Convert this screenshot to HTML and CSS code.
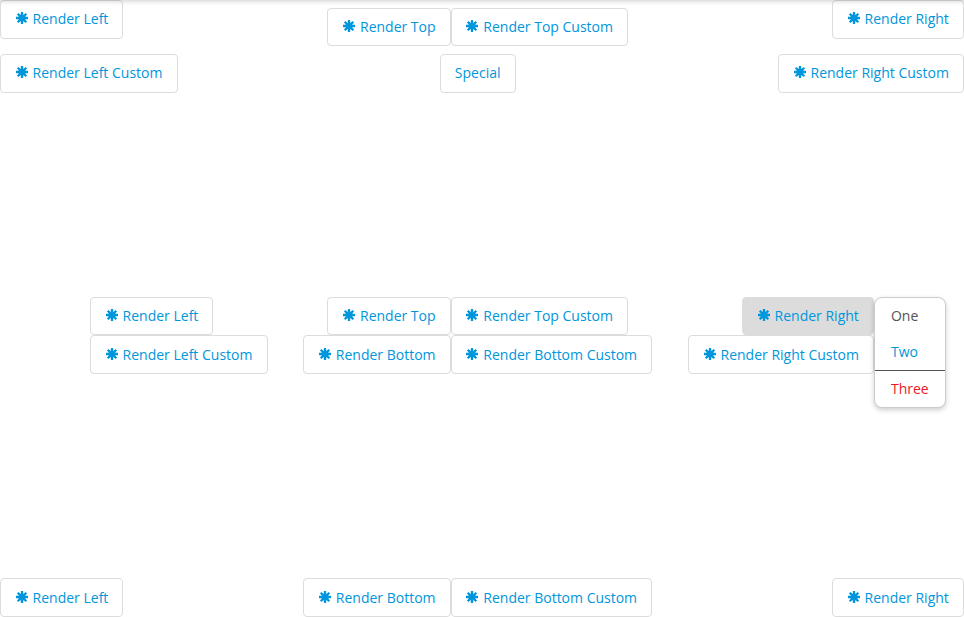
FILE: index.html
```html
<!DOCTYPE html>
<html lang="en">
<head>
<meta charset="utf-8">
<title>Menus</title>
<link rel="stylesheet" href="styles.css">
</head>
<body>
<svg class="defs" aria-hidden="true">
  <symbol id="asterisk" viewBox="0 0 12 12">
    <path d="M6 0V12M0 6H12M1.7 1.7L10.3 10.3M10.3 1.7L1.7 10.3" fill="none" stroke="currentColor" stroke-width="2.3"/>
    <circle cx="6" cy="6" r="3.5" fill="currentColor"/>
  </symbol>
</svg>
<div class="page">
  <header>
    <div class="row row-first">
      <button class="button"><svg class="icon"><use href="#asterisk"/></svg>Render Left</button>
      <div class="group group-top">
        <button class="button"><svg class="icon"><use href="#asterisk"/></svg>Render Top</button>
        <button class="button"><svg class="icon"><use href="#asterisk"/></svg>Render Top Custom</button>
      </div>
      <button class="button"><svg class="icon"><use href="#asterisk"/></svg>Render Right</button>
    </div>
    <div class="row">
      <button class="button"><svg class="icon"><use href="#asterisk"/></svg>Render Left Custom</button>
      <button class="button">Special</button>
      <button class="button"><svg class="icon"><use href="#asterisk"/></svg>Render Right Custom</button>
    </div>
  </header>
  <main class="row row-middle">
    <div class="stack stack-left">
      <button class="button"><svg class="icon"><use href="#asterisk"/></svg>Render Left</button>
      <button class="button"><svg class="icon"><use href="#asterisk"/></svg>Render Left Custom</button>
    </div>
    <div class="stack">
      <div class="group">
        <button class="button"><svg class="icon"><use href="#asterisk"/></svg>Render Top</button>
        <button class="button"><svg class="icon"><use href="#asterisk"/></svg>Render Top Custom</button>
      </div>
      <div class="group">
        <button class="button"><svg class="icon"><use href="#asterisk"/></svg>Render Bottom</button>
        <button class="button"><svg class="icon"><use href="#asterisk"/></svg>Render Bottom Custom</button>
      </div>
    </div>
    <div class="stack stack-right">
      <button class="button active"><svg class="icon"><use href="#asterisk"/></svg>Render Right</button>
      <button class="button"><svg class="icon"><use href="#asterisk"/></svg>Render Right Custom</button>
      <div class="menu">
        <div class="item">One</div>
        <div class="item link">Two</div>
        <div class="item danger">Three</div>
      </div>
    </div>
  </main>
  <footer class="row row-last">
    <button class="button"><svg class="icon"><use href="#asterisk"/></svg>Render Left</button>
    <div class="group">
      <button class="button"><svg class="icon"><use href="#asterisk"/></svg>Render Bottom</button>
      <button class="button"><svg class="icon"><use href="#asterisk"/></svg>Render Bottom Custom</button>
    </div>
    <button class="button"><svg class="icon"><use href="#asterisk"/></svg>Render Right</button>
  </footer>
</div>
<div class="top-shadow"></div>
</body>
</html>
```
FILE: styles.css
```css
* { box-sizing: border-box; }
body {
  margin: 0;
  background: #fff;
  color: #545454;
  font: 14px/20px "Open Sans", sans-serif;
}
.defs { position: absolute; width: 0; height: 0; }
.page {
  display: flex;
  flex-direction: column;
  justify-content: space-between;
  height: 617px;
  overflow: hidden;
}
.row {
  display: flex;
  justify-content: space-between;
  align-items: flex-start;
}
.row-first { height: 54px; }
.row-middle { padding: 0 90px; }
.row-last { padding-bottom: 0.1px; }
.group { display: flex; }
.group-top { margin-top: 7.6px; }
.stack {
  position: relative;
  display: flex;
  flex-direction: column;
  align-items: center;
}
.stack-left { align-items: flex-start; }
.stack-right { align-items: flex-end; }
.button {
  display: flex;
  align-items: center;
  height: 38.5px;
  padding: 0 14.15px 0 14px;
  border: 1px solid #dcdcdc;
  border-radius: 4px;
  background: #fff;
  color: #0096dc;
  font: inherit;
  white-space: nowrap;
}
.button.active { background: #dcdcdc; }
.icon {
  width: 12px;
  height: 12px;
  margin: -2px 4.85px 0 0.75px;
}
.menu {
  position: absolute;
  left: 100%;
  top: 0;
  border: 1px solid #ccc;
  border-radius: 8px;
  background: #fff;
  box-shadow: 0 2px 5px rgba(0, 0, 0, 0.2);
}
.item { height: 36px; padding: 8px 16px; }
.link { color: #0096dc; }
.danger {
  height: 37px;
  border-top: 1px solid #545454;
  color: #eb1928;
}
.top-shadow {
  position: absolute;
  top: -10px;
  left: -10px;
  right: -10px;
  height: 10px;
  box-shadow: 0 1px 5px rgba(0, 0, 0, 0.2);
  clip-path: inset(0 10px -10px 10px);
}
```
